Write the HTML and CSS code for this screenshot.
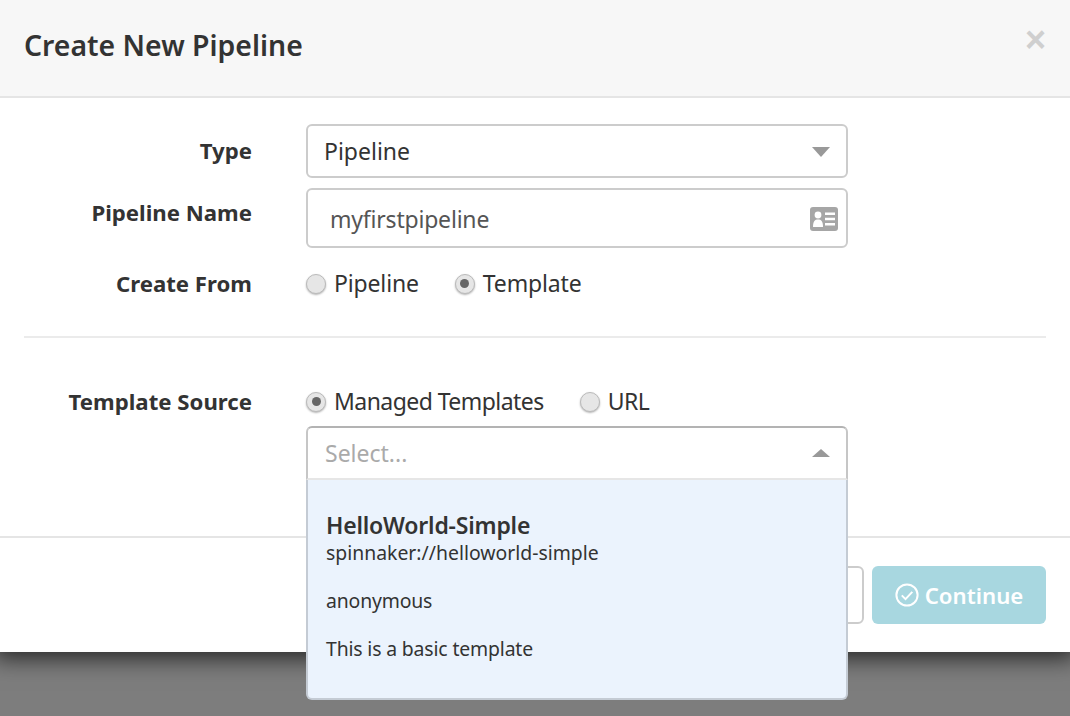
FILE: index.html
```html
<!DOCTYPE html>
<html lang="en">
<head>
  <meta charset="UTF-8" />
  <title>Create New Pipeline</title>
  <link rel="stylesheet" href="styles.css">
</head>
<body>

  <div class="modal">
    <div class="modal-header">
      <h1>Create New Pipeline</h1>
      <span class="close">×</span>
    </div>

    <div class="modal-body">
      <div class="row row-type">
        <label class="row-label">Type</label>
        <div class="select">
          <span>Pipeline</span>
          <i class="caret"></i>
        </div>
      </div>

      <div class="row row-name">
        <label class="row-label">Pipeline Name</label>
        <div class="name-input">
          <span>myfirstpipeline</span>
          <svg class="card-icon" viewBox="0 0 28 24" width="28" height="24">
            <rect width="28" height="24" rx="3" fill="#a6a6a6"/>
            <circle cx="8" cy="8" r="3.4" fill="#fff"/>
            <path d="M3 20 C3 14 5 12.5 8 12.5 C11 12.5 13 14 13 20 Z" fill="#fff"/>
            <path d="M15 5.5h10v2.4H15zM15 10.8h10v2.4H15zM15 16.1h10v2.4H15z" fill="#fff"/>
          </svg>
        </div>
      </div>

      <div class="row row-from">
        <label class="row-label">Create From</label>
        <div class="radios">
          <span class="radio"><i class="dot"></i><span class="radio-text">Pipeline</span></span>
          <span class="radio"><i class="dot on"></i><span class="radio-text">Template</span></span>
        </div>
      </div>

      <hr class="divider">

      <div class="row row-source">
        <label class="row-label">Template Source</label>
        <div class="radios">
          <span class="radio"><i class="dot on"></i><span class="radio-text tight">Managed Templates</span></span>
          <span class="radio"><i class="dot"></i><span class="radio-text tight">URL</span></span>
        </div>
      </div>

      <div class="row row-picker">
        <div class="row-label"></div>
        <div class="picker">
          <div class="picker-control">
            <span>Select...</span>
            <i class="caret caret-up"></i>
          </div>
          <div class="picker-menu">
            <div class="option-name">HelloWorld-Simple</div>
            <div class="option-source">spinnaker://helloworld-simple</div>
            <div class="option-line">anonymous</div>
            <div class="option-line">This is a basic template</div>
          </div>
        </div>
      </div>
    </div>

    <div class="modal-footer">
      <button class="btn-cancel">Cancel</button>
      <button class="btn-continue">
        <svg viewBox="0 0 24 24" width="24" height="24">
          <circle cx="12" cy="12" r="10.6" fill="none" stroke="#fff" stroke-width="2"/>
          <path d="M6.8 12.4l3.7 3.7 6.8-7.2" fill="none" stroke="#fff" stroke-width="2"/>
        </svg>
        Continue
      </button>
    </div>
  </div>

</body>
</html>
```

FILE: styles.css
```css
body {
  margin: 0;
  height: 716px;
  overflow: hidden;
  background-color: #7d7d7d;
  font-family: "Noto Sans", Arial, sans-serif;
  font-size: 23px;
  color: #333;
}

.modal {
  height: 652px;
  background-color: #fff;
  box-shadow: 0 0 22px 6px rgba(0, 0, 0, 0.7);
  display: flex;
  flex-direction: column;
}

.modal-header {
  height: 96px;
  padding: 0 24px;
  background-color: #f7f7f7;
  border-bottom: 2px solid #e5e5e5;
  display: flex;
  justify-content: space-between;
}

h1 {
  margin: 26px 0 0;
  font-size: 28.4px;
  line-height: 38px;
  font-weight: 600;
}

.close {
  font-family: "Liberation Sans", Arial, sans-serif;
  font-size: 36px;
  font-weight: bold;
  line-height: 40px;
  margin-top: 20px;
  color: #cfcfcf;
}

.modal-body {
  height: 412px;
  padding: 26px 24px 0;
}

.row {
  display: flex;
}

.row-label {
  width: 228px;
  margin-right: 54px;
  padding-bottom: 1px;
  text-align: right;
  font-weight: 700;
  font-size: 22.2px;
}

.row-type {
  height: 54px;
  align-items: center;
}

.row-name {
  margin-top: 10px;
  height: 60px;
}

.row-name .row-label {
  line-height: 50px;
}

.row-from {
  margin-top: 15px;
  height: 41px;
  align-items: center;
}

.row-source {
  height: 41px;
  align-items: center;
}

.row-picker {
  margin-top: 4px;
}

.select,
.name-input {
  box-sizing: border-box;
  width: 542px;
  height: 100%;
  border: 2px solid #ccc;
  border-radius: 6px;
  display: flex;
  align-items: center;
  justify-content: space-between;
}

.select {
  padding: 0 16px 0 16px;
}

.select .caret {
  margin-top: 2px;
}

.name-input {
  padding: 2px 8px 0 22px;
  color: #555;
  letter-spacing: -0.2px;
}

.caret {
  width: 0;
  height: 0;
  border-left: 9px solid transparent;
  border-right: 9px solid transparent;
  border-top: 10px solid #999;
}

.caret-up {
  border-top: 0;
  border-bottom: 8px solid #999;
}

.radios {
  display: flex;
}

.radio {
  display: flex;
  align-items: center;
  margin-right: 36px;
}

.radio-text {
  padding-bottom: 2px;
  letter-spacing: -0.15px;
}

.radio-text.tight {
  letter-spacing: -0.55px;
}

.dot {
  box-sizing: border-box;
  width: 20px;
  height: 20px;
  margin-right: 8px;
  border-radius: 50%;
  border: 1px solid #bbb;
  background-color: #e6e6e6;
  box-shadow: 0 1px 2px rgba(0, 0, 0, 0.3);
  display: flex;
  align-items: center;
  justify-content: center;
}

.dot.on::after {
  content: "";
  width: 9px;
  height: 9px;
  border-radius: 50%;
  background-color: #666;
}

.divider {
  height: 2px;
  margin: 32px 0 43px;
  border: 0;
  background-color: #ebebeb;
}

.picker {
  position: relative;
  width: 542px;
}

.picker-control {
  box-sizing: border-box;
  height: 54px;
  padding: 0 16px 0 17px;
  border: 2px solid #b3b3b3;
  border-color: #b3b3b3 #c6c6c6 #e6e6e6;
  border-radius: 6px 6px 0 0;
  background-color: #fff;
  color: #aaa;
  display: flex;
  align-items: center;
  justify-content: space-between;
}

.picker-menu {
  position: absolute;
  top: 54px;
  left: 0;
  right: 0;
  z-index: 10;
  box-sizing: border-box;
  height: 220px;
  padding: 29px 18px 0;
  background-color: #ebf3fd;
  border: 2px solid #c4cbd4;
  border-top: 0;
  border-radius: 0 0 6px 6px;
  font-size: 19.4px;
}

.option-name {
  font-size: 23px;
  font-weight: 600;
  line-height: 32px;
  letter-spacing: -0.2px;
}

.option-source {
  line-height: 24px;
}

.option-line {
  margin-top: 24px;
  line-height: 24px;
  letter-spacing: -0.15px;
}

.modal-footer {
  flex: 1;
  padding: 28px 24px 0;
  border-top: 2px solid #e5e5e5;
  display: flex;
  justify-content: flex-end;
  align-items: flex-start;
  gap: 8px;
}

.modal-footer button {
  box-sizing: border-box;
  height: 58px;
  border-radius: 6px;
  font-family: inherit;
  font-size: 22.2px;
}

.btn-cancel {
  width: 120px;
  background-color: #fff;
  border: 2px solid #ccc;
  color: #333;
}

.btn-continue {
  width: 174px;
  background-color: #a8d7e0;
  border: none;
  color: #fff;
  font-weight: 600;
  display: flex;
  align-items: center;
  justify-content: center;
  gap: 6px;
}
```
